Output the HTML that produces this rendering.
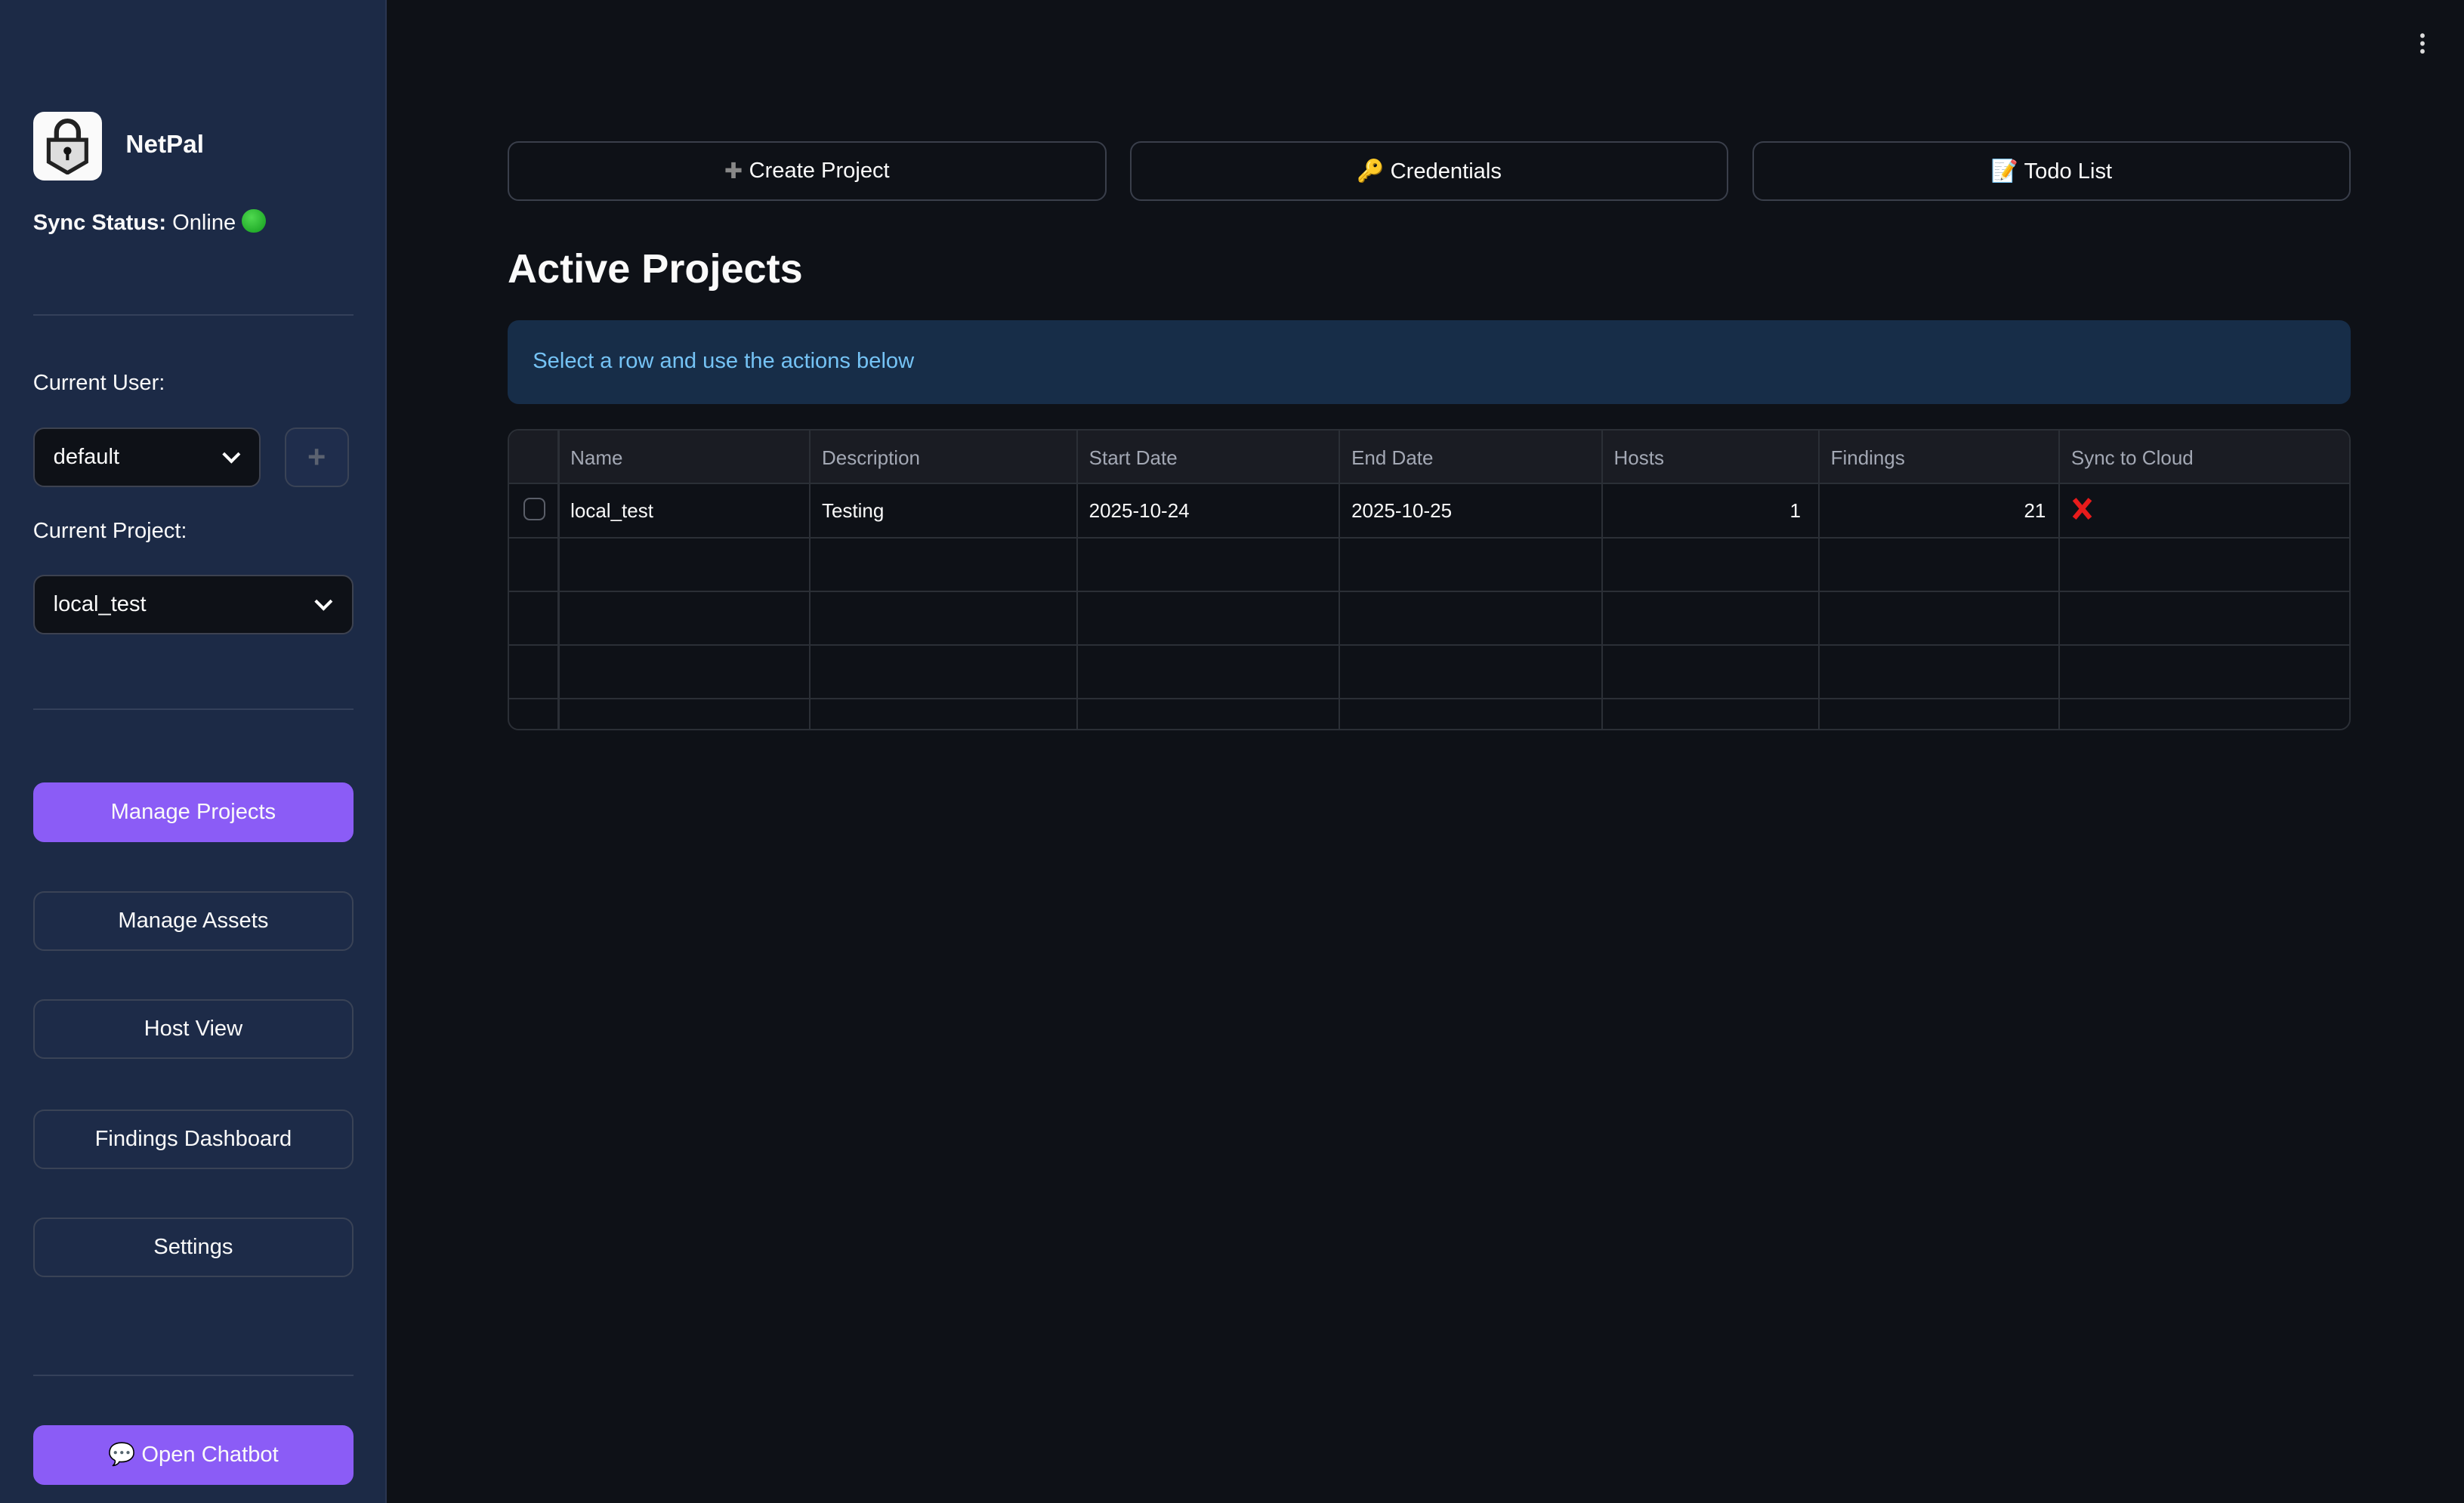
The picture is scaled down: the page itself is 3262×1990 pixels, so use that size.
<!DOCTYPE html>
<html><head><meta charset="utf-8"><style>
*{box-sizing:border-box;margin:0;padding:0}
html,body{width:3262px;height:1990px;overflow:hidden;background:#0e1117}
#root{zoom:2.0804;position:relative;width:1568px;height:957px;font-family:"Liberation Sans",sans-serif;color:#fafafa;font-size:14px}
.abs{position:absolute}
#side{left:0;top:0;width:246px;height:957px;background:#1c2a46;border-right:1px solid #2a3550}
.hr{position:absolute;left:21px;width:204px;height:1px;background:#34405a}
.btn{position:absolute;left:21px;width:204px;height:38px;border:1px solid #3a4356;border-radius:7px;background:#1d2b48;display:flex;align-items:center;justify-content:center;font-size:14px}
.pri{background:#8b5cf6;border-color:#8b5cf6}
.sel{position:absolute;background:#0e1117;border:1px solid #3d4250;border-radius:7px;height:38px;display:flex;align-items:center;padding-left:12px;font-size:14px}
.chev{position:absolute;right:14px;top:14px;width:8px;height:8px;border-right:2px solid #fff;border-bottom:2px solid #fff;transform:rotate(45deg)}
.tb{position:absolute;top:90px;width:381px;height:38px;border:1px solid #3a3f4b;border-radius:7px;background:#0e1117;display:flex;align-items:center;justify-content:center;font-size:14px}
.grid{position:absolute;left:323px;top:273px;width:1173px;height:192px;border:1px solid #2b2f36;border-radius:7px;overflow:hidden}
.hd{position:absolute;left:0;top:0;width:100%;height:34px;background:#1a1c23;border-bottom:1px solid #2b2f36}
.vl{position:absolute;top:0;width:1px;height:192px;background:#2b2f36}
.hl{position:absolute;left:0;width:100%;height:1px;background:#2b2f36}
.ht{position:absolute;top:10px;font-size:12.5px;color:#a3a8b4}
.ct{position:absolute;top:44px;font-size:12.5px;color:#fafafa}
</style></head><body><div id="root">
<div id="side" class="abs">
  <div class="abs" style="left:21px;top:71px;width:44px;height:44px;background:#fafafa;border-radius:7px;display:flex;align-items:center;justify-content:center">
    <svg width="34" height="36" viewBox="0 0 34 36"><path d="M10 14V9a7 7 0 0 1 14 0v5" fill="none" stroke="#222" stroke-width="3"/><path d="M5 14h24v14l-12 7-12-7z" fill="#ddd" stroke="#222" stroke-width="2.5"/><circle cx="17" cy="21" r="2.5" fill="#111"/><rect x="16" y="21" width="2" height="6" fill="#111"/></svg>
  </div>
  <div class="abs" style="left:80px;top:83px;font-size:16px;font-weight:bold">NetPal</div>
  <div class="abs" style="left:21px;top:133px;font-size:14px"><b>Sync Status:</b> Online <span style="display:inline-block;width:15px;height:15px;border-radius:50%;background:radial-gradient(circle at 40% 35%,#4fd94f,#129c1d);vertical-align:-2px"></span></div>
  <div class="hr" style="top:200px"></div>
  <div class="abs" style="left:21px;top:236px">Current User:</div>
  <div class="sel" style="left:21px;top:272px;width:145px">default<span class="chev" style="top:12px"></span></div>
  <div class="abs" style="left:181px;top:272px;width:41px;height:38px;border:1px solid #3a4356;border-radius:7px;background:#1f2d4c;color:#5b6270;font-size:20px;font-weight:bold;display:flex;align-items:center;justify-content:center">+</div>
  <div class="abs" style="left:21px;top:330px">Current Project:</div>
  <div class="sel" style="left:21px;top:366px;width:204px">local_test<span class="chev" style="top:12px"></span></div>
  <div class="hr" style="top:451px"></div>
  <div class="btn pri" style="top:498px">Manage Projects</div>
  <div class="btn" style="top:567px">Manage Assets</div>
  <div class="btn" style="top:636px">Host View</div>
  <div class="btn" style="top:706px">Findings Dashboard</div>
  <div class="btn" style="top:775px">Settings</div>
  <div class="hr" style="top:875px"></div>
  <div class="btn pri" style="top:907px">💬 Open Chatbot</div>
</div>
<div class="abs" style="left:1540px;top:20px;width:3px;height:14px;background:radial-gradient(circle,#ddd 1.3px,transparent 1.6px) 0 0/3px 5px"></div>
<div class="tb" style="left:323px"><span style="color:#888;margin-right:4px">✚</span>Create Project</div>
<div class="tb" style="left:719px">🔑 Credentials</div>
<div class="tb" style="left:1115px">📝 Todo List</div>
<div class="abs" style="left:323px;top:156px;font-size:26px;font-weight:bold">Active Projects</div>
<div class="abs" style="left:323px;top:204px;width:1173px;height:53px;background:#172d48;border-radius:7px;color:#75c3f5;font-size:14px;padding:18px 0 0 16px">Select a row and use the actions below</div>
<div class="grid">
  <div class="hd"></div>
  <div class="hl" style="top:68px"></div><div class="hl" style="top:102px"></div><div class="hl" style="top:136px"></div><div class="hl" style="top:170px"></div>
  <div class="vl" style="left:31px"></div><div class="vl" style="left:191px"></div><div class="vl" style="left:361px"></div><div class="vl" style="left:528px"></div><div class="vl" style="left:695px"></div><div class="vl" style="left:833px"></div><div class="vl" style="left:986px"></div>
  <div class="ht" style="left:39px">Name</div><div class="ht" style="left:199px">Description</div><div class="ht" style="left:369px">Start Date</div><div class="ht" style="left:536px">End Date</div><div class="ht" style="left:703px">Hosts</div><div class="ht" style="left:841px">Findings</div><div class="ht" style="left:994px">Sync to Cloud</div>
  <div class="abs" style="left:9px;top:43px;width:14px;height:14px;border:1px solid #5a5e68;border-radius:4px"></div>
  <div class="ct" style="left:39px">local_test</div><div class="ct" style="left:199px">Testing</div><div class="ct" style="left:369px">2025-10-24</div><div class="ct" style="left:536px">2025-10-25</div>
  <div class="ct" style="left:815px">1</div><div class="ct" style="left:964px">21</div>
  <svg class="abs" style="left:994px;top:43px" width="14" height="14" viewBox="0 0 14 14"><path d="M2 1L12 13M12 1L2 13" stroke="#e81b1b" stroke-width="3"/></svg>
</div>
</div></body></html>
